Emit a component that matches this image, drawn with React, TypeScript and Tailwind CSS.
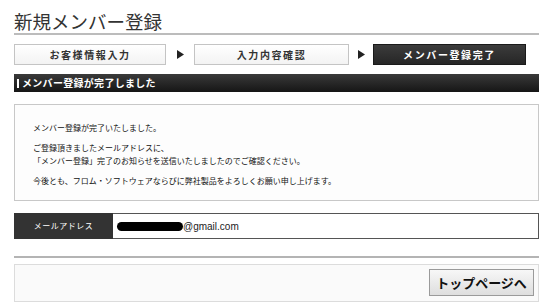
import React from "react";

const jp = { fontFamily: '"Noto Sans CJK JP", "Noto Sans", sans-serif' };

function Arrow() {
  return (
    <svg width="7" height="9" viewBox="0 0 7 9">
      <polygon points="0,0 7,4.5 0,9" fill="#222" />
    </svg>
  );
}

export default function App() {
  return (
    <div className="w-[546px] h-[306px] bg-white overflow-hidden" style={jp}>
      <div className="ml-[14px] w-[525px] pt-[9px]">
        <h1 className="text-[18.5px] leading-[24px] text-[#333] font-normal">
          新規メンバー登録
        </h1>
        <div className="h-[2px] bg-[#bcbcbc]" />

        {/* steps */}
        <div className="mt-[9px] flex h-[21px] items-stretch">
          <div className="w-[152px] flex items-center justify-center border border-[#c4c4c4] bg-gradient-to-b from-white to-[#f3f3f3] text-[10px] font-bold tracking-[1.6px] text-[#333]">
            お客様情報入力
          </div>
          <div className="w-[28px] flex items-center justify-center">
            <Arrow />
          </div>
          <div className="w-[155px] flex items-center justify-center border border-[#c4c4c4] bg-gradient-to-b from-white to-[#f3f3f3] text-[10px] font-bold tracking-[1.6px] text-[#333]">
            入力内容確認
          </div>
          <div className="w-[24px] flex items-center justify-center">
            <Arrow />
          </div>
          <div className="w-[153px] flex items-center justify-center border border-[#1a1a1a] bg-gradient-to-b from-[#3c3c3c] to-[#262626] text-[10px] font-bold tracking-[1.6px] text-white">
            メンバー登録完了
          </div>
        </div>

        {/* header bar */}
        <div className="mt-[9px] h-[18px] flex items-center bg-gradient-to-b from-[#3a3a3a] to-[#161616] pl-[3px]">
          <span className="inline-block w-[2px] h-[9px] bg-white mr-[3px]" />
          <span className="text-[10px] leading-[18px] font-bold text-white tracking-[0.3px]">
            メンバー登録が完了しました
          </span>
        </div>

        {/* content box */}
        <div className="mt-[12px] h-[97px] border border-[#c8c8c8] bg-[#fdfdfd] pt-[16px] pl-[18px] text-[8px] leading-[13px] text-[#111]">
          <p>メンバー登録が完了いたしました。</p>
          <p className="mt-[7px]">ご登録頂きましたメールアドレスに、</p>
          <p>「メンバー登録」完了のお知らせを送信いたしましたのでご確認ください。</p>
          <p className="mt-[7px]">今後とも、フロム・ソフトウェアならびに弊社製品をよろしくお願い申し上げます。</p>
        </div>

        {/* email row */}
        <div className="mt-[12px] h-[26px] flex">
          <div className="w-[99px] bg-[#333] flex items-center justify-center text-[8px] text-white tracking-[0.5px]">
            メールアドレス
          </div>
          <div className="flex-1 flex items-center border-y border-r border-[#555] pl-[4px]">
            <span className="inline-block w-[66px] h-[9px] rounded-full bg-black" />
            <span
              className="text-[10px] text-[#222]"
              style={{ fontFamily: '"Liberation Sans", Arial, sans-serif' }}
            >
              @gmail.com
            </span>
          </div>
        </div>

        {/* divider */}
        <div className="mt-[17px] h-[2px] bg-[#b4b4b4]" />

        {/* bottom box */}
        <div className="mt-[6px] h-[38px] border border-[#dcdcdc] bg-[#fafafa] flex justify-end items-start pt-[4px] pr-[4px]">
          <button className="w-[105px] h-[27px] border border-[#9a9a9a] bg-gradient-to-b from-[#f7f7f7] to-[#dedede] text-[13px] font-bold text-[#111] leading-none">
            トップページへ
          </button>
        </div>
      </div>
    </div>
  );
}
